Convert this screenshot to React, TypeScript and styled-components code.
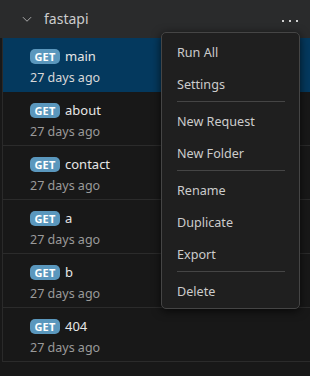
import styled, { createGlobalStyle } from 'styled-components';

const GlobalStyle = createGlobalStyle`
  html, body {
    margin: 0;
    padding: 0;
    background: #181818;
  }
  body {
    font-family: "Noto Sans", "Open Sans", sans-serif;
    width: 310px;
    height: 376px;
    overflow: hidden;
  }
`;

const requests = [
  { name: 'main', age: '27 days ago' },
  { name: 'about', age: '27 days ago' },
  { name: 'contact', age: '27 days ago' },
  { name: 'a', age: '27 days ago' },
  { name: 'b', age: '27 days ago' },
  { name: '404', age: '27 days ago' },
];

const menuGroups = [
  ['Run All', 'Settings'],
  ['New Request', 'New Folder'],
  ['Rename', 'Duplicate', 'Export'],
  ['Delete'],
];

const App = () => {
  return (
    <>
      <GlobalStyle />
      <Panel>
        <Header>
          <Chevron width="12" height="12" viewBox="0 0 16 16">
            <path d="M2.5 5.5 8 11l5.5-5.5" fill="none" stroke="#c5c5c5" strokeWidth="1.1" />
          </Chevron>
          <FolderName>fastapi</FolderName>
          <Dots>
            <span />
            <span />
            <span />
          </Dots>
        </Header>
        <List>
          {requests.map((r, i) => (
            <Row key={r.name} selected={i === 0}>
              <TopLine>
                <Badge>GET</Badge>
                <Name>{r.name}</Name>
              </TopLine>
              <Age selected={i === 0}>{r.age}</Age>
            </Row>
          ))}
        </List>
        <Menu>
          {menuGroups.map((group, gi) => (
            <div key={gi}>
              {gi > 0 && <Separator />}
              {group.map((label) => (
                <MenuItem key={label}>{label}</MenuItem>
              ))}
            </div>
          ))}
        </Menu>
      </Panel>
    </>
  );
};

const Panel = styled.div`
  position: relative;
  width: 310px;
  height: 376px;
  background: #181818;
`;

const Header = styled.div`
  display: flex;
  align-items: center;
  height: 38px;
  padding-left: 21px;
  padding-right: 12px;
  background: #2a2b2c;
  color: #cccccc;
`;

const Chevron = styled.svg`
  flex: none;
  margin-right: 11px;
`;

const FolderName = styled.div`
  flex: 1;
  font-size: 14px;
  margin-top: -1px;
`;

const Dots = styled.div`
  display: flex;
  gap: 5px;
  margin-top: 3px;

  span {
    width: 2px;
    height: 2px;
    background: #d0d0d0;
  }
`;

const List = styled.div`
  margin-left: 2px;
  border-left: 1px solid #2a2a2a;
`;

const Row = styled.div<{ selected?: boolean }>`
  display: flex;
  flex-direction: column;
  gap: 4px;
  height: 54px;
  box-sizing: border-box;
  padding: 9px 0 0 27px;
  border-bottom: 1px solid ${(p) => (p.selected ? '#04395e' : '#2b2b2b')};
  background: ${(p) => (p.selected ? '#04395e' : 'transparent')};
`;

const TopLine = styled.div`
  display: flex;
  align-items: center;
  gap: 5px;
  height: 18px;
`;

const Badge = styled.span`
  display: inline-flex;
  align-items: center;
  justify-content: center;
  width: 30px;
  height: 15px;
  border-radius: 5px;
  background: #5a97bd;
  color: #ffffff;
  font-size: 11px;
  font-weight: 700;
  letter-spacing: 0.2px;
`;

const Name = styled.span`
  color: #e6e6e6;
  font-size: 13px;
`;

const Age = styled.div<{ selected?: boolean }>`
  color: ${(p) => (p.selected ? '#d8d8d8' : '#9a9a9a')};
  font-size: 12.5px;
  line-height: 18px;
`;

const Menu = styled.div`
  position: absolute;
  left: 161px;
  top: 32px;
  width: 139px;
  box-sizing: border-box;
  padding: 3px 0 0;
  height: 277px;
  background: #1f1f1f;
  border: 1px solid #454545;
  border-radius: 5px;
  box-shadow: 0 2px 10px rgba(0, 0, 0, 0.7);
  color: #cccccc;
  font-size: 12.6px;
`;

const MenuItem = styled.div`
  display: flex;
  align-items: center;
  height: 32px;
  padding-left: 15px;
`;

const Separator = styled.div`
  height: 1px;
  margin: 1px 14px 3px 15px;
  background: #454545;
`;

export default App;
